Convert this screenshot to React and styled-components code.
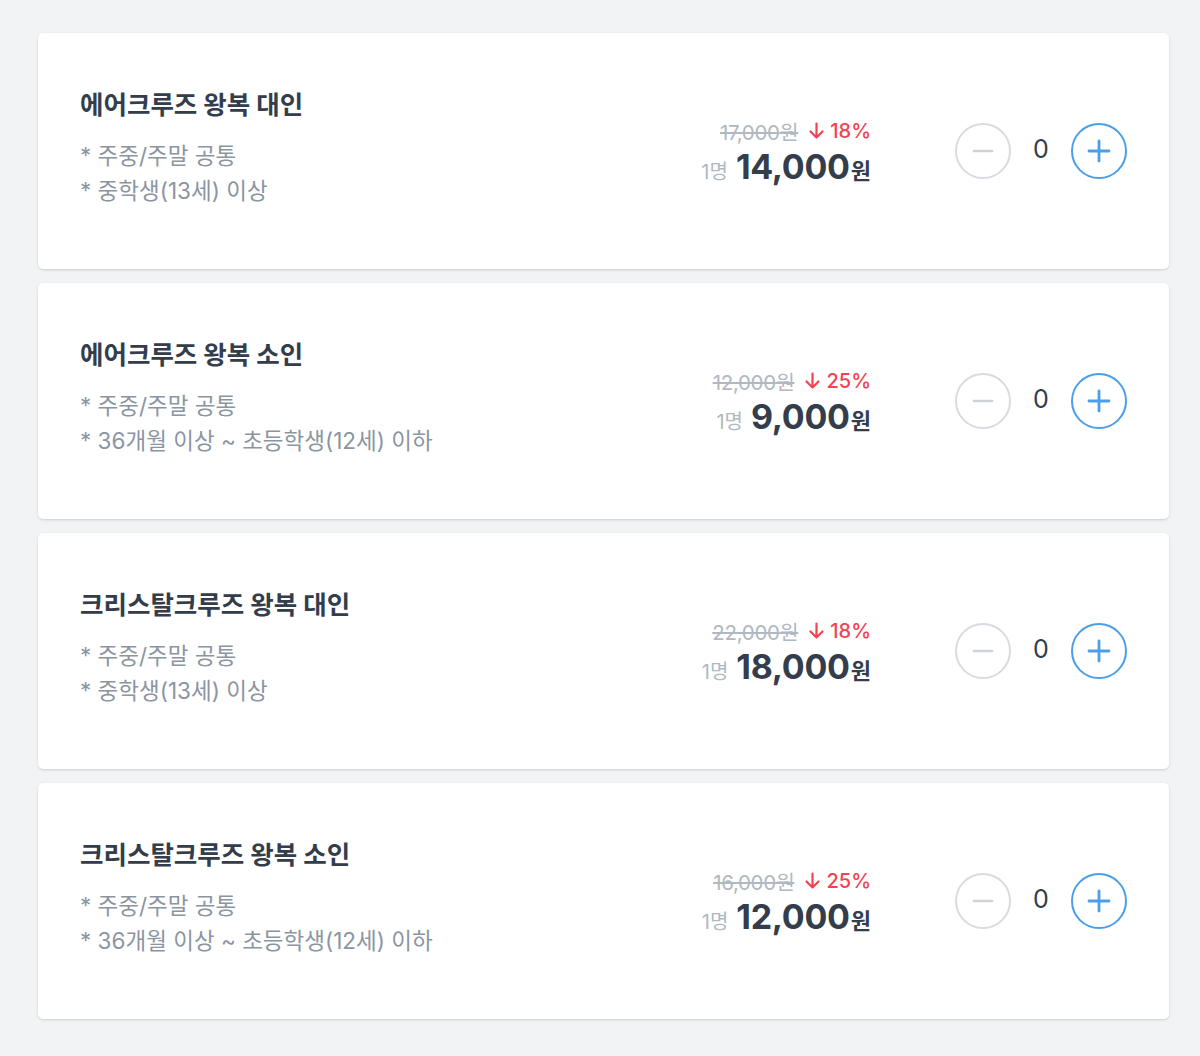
import React from "react";
import styled, { createGlobalStyle } from "styled-components";

const GlobalStyle = createGlobalStyle`
  html, body {
    margin: 0;
    padding: 0;
    background: #f2f3f5;
    font-family: Inter, "Noto Sans CJK KR", sans-serif;
  }
`;

const items = [
  { title: "에어크루즈 왕복 대인", notes: ["주중/주말 공통", "중학생(13세) 이상"], origin: "17,000", rate: 18, price: "14,000" },
  { title: "에어크루즈 왕복 소인", notes: ["주중/주말 공통", "36개월 이상 ~ 초등학생(12세) 이하"], origin: "12,000", rate: 25, price: "9,000" },
  { title: "크리스탈크루즈 왕복 대인", notes: ["주중/주말 공통", "중학생(13세) 이상"], origin: "22,000", rate: 18, price: "18,000" },
  { title: "크리스탈크루즈 왕복 소인", notes: ["주중/주말 공통", "36개월 이상 ~ 초등학생(12세) 이하"], origin: "16,000", rate: 25, price: "12,000" },
];

const App = () => {
  return (
    <>
      <GlobalStyle />
      <List>
        {items.map((item) => (
          <Card key={item.title}>
            <Info>
              <Title>{item.title}</Title>
              {item.notes.map((n) => (
                <Note key={n}>* {n}</Note>
              ))}
            </Info>
            <PriceBox>
              <DiscountRow>
                <Origin>{item.origin}원</Origin>
                <Rate>
                  <svg width="17" height="18" viewBox="0 0 17 18" fill="none">
                    <path d="M8.5 1.5v14M2.5 9.5l6 6 6-6" stroke="#f04452" strokeWidth="2.2" strokeLinecap="round" strokeLinejoin="round" />
                  </svg>
                  {item.rate}%
                </Rate>
              </DiscountRow>
              <PriceRow>
                <Unit>1명</Unit>
                <Price>{item.price}</Price>
                <Won>원</Won>
              </PriceRow>
            </PriceBox>
            <Counter>
              <RoundButton $active={false} aria-label="빼기">
                <svg width="22" height="22" viewBox="0 0 22 22">
                  <path d="M2 11h18" stroke="#cfd3d8" strokeWidth="2.6" strokeLinecap="round" />
                </svg>
              </RoundButton>
              <Count>0</Count>
              <RoundButton $active aria-label="더하기">
                <svg width="24" height="24" viewBox="0 0 24 24">
                  <path d="M2 12h20M12 2v20" stroke="#4a9fe8" strokeWidth="2.8" strokeLinecap="round" />
                </svg>
              </RoundButton>
            </Counter>
          </Card>
        ))}
      </List>
    </>
  );
};

export default App;

const List = styled.div`
  display: flex;
  flex-direction: column;
  gap: 14px;
  padding: 33px 31px 36px 38px;
`;

const Card = styled.div`
  display: flex;
  align-items: center;
  height: 236px;
  box-sizing: border-box;
  padding: 0 42px;
  background: #fff;
  border-radius: 5px;
  box-shadow: 0 1px 3px rgba(0, 0, 0, 0.12), 0 1px 1px rgba(0, 0, 0, 0.04);
`;

const Info = styled.div`
  flex: 1;
  display: flex;
  flex-direction: column;
  margin-top: -7px;
`;

const Title = styled.h2`
  margin: 0 0 16px;
  font-size: 25.5px;
  line-height: 34px;
  font-weight: 700;
  color: #333d4b;
`;

const Note = styled.p`
  margin: 0;
  font-size: 22.5px;
  line-height: 35px;
  color: #8b95a1;
`;

const PriceBox = styled.div`
  display: flex;
  flex-direction: column;
  align-items: flex-end;
  margin-right: 84px;
`;

const DiscountRow = styled.div`
  display: flex;
  align-items: center;
  gap: 10px;
  height: 30px;
`;

const Origin = styled.span`
  font-size: 20.5px;
  color: #b0b8c1;
  text-decoration: line-through;
  letter-spacing: -0.3px;
`;

const Rate = styled.span`
  display: flex;
  align-items: center;
  gap: 5px;
  font-size: 20px;
  color: #f04452;
  font-weight: 500;
`;

const PriceRow = styled.div`
  display: flex;
  align-items: baseline;
  height: 40px;
`;

const Unit = styled.span`
  font-size: 20px;
  color: #b0b8c1;
  margin-right: 8px;
`;

const Price = styled.span`
  font-size: 34px;
  font-weight: 700;
  color: #333d4b;
  letter-spacing: -0.3px;
`;

const Won = styled.span`
  font-size: 22px;
  font-weight: 700;
  color: #333d4b;
  margin-left: 1px;
`;

const Counter = styled.div`
  display: flex;
  align-items: center;
  gap: 18px;
`;

const RoundButton = styled.button`
  width: 56px;
  height: 56px;
  border-radius: 50%;
  border: 2px solid ${({ $active }) => ($active ? "#4a9fe8" : "#d8dbe0")};
  background: #fff;
  display: flex;
  align-items: center;
  justify-content: center;
  padding: 0;
  cursor: pointer;
`;

const Count = styled.span`
  width: 24px;
  text-align: center;
  font-size: 25px;
  color: #333d4b;
  margin-top: -4px;
`;
